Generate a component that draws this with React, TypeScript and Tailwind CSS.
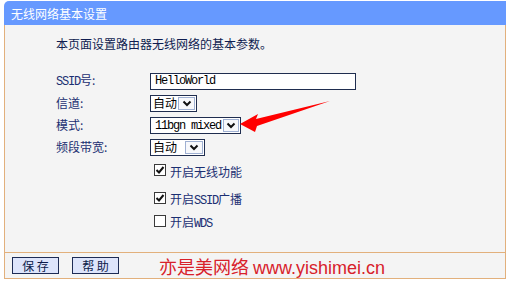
import React from 'react';

const navy = 'text-[#1b2f72]';

function Mono({ children }: { children: React.ReactNode }) {
  return <span className="font-['Liberation_Mono',monospace] text-[12px] tracking-[-1.2px]">{children}</span>;
}

function Chevron() {
  return (
    <svg width="10" height="7" viewBox="0 0 10 7">
      <polyline points="1.5,1.5 5,5 8.5,1.5" fill="none" stroke="#111" strokeWidth="2" />
    </svg>
  );
}

function Select({ width, btnWidth, children }: { width: string; btnWidth: string; children: React.ReactNode }) {
  return (
    <div className={`flex h-[17px] shrink-0 border border-[#1f2d4f] bg-white ${width}`}>
      <div className="flex flex-1 items-center overflow-hidden whitespace-nowrap pl-[2px] text-[12px] leading-none text-black">
        {children}
      </div>
      <div className={`m-[1px] flex shrink-0 items-center justify-center border border-[#9fb0d2] bg-[#f7f8fb] ${btnWidth}`}>
        <Chevron />
      </div>
    </div>
  );
}

function Check({ checked, children }: { checked: boolean; children: React.ReactNode }) {
  return (
    <div className="flex h-[22px] items-center pl-[4px]">
      <div className="flex h-[12px] w-[12px] items-center justify-center border border-[#3a3a3a] bg-white">
        {checked && (
          <svg width="10" height="10" viewBox="0 0 10 10">
            <polyline points="1.5,5 4,7.5 8.5,2" fill="none" stroke="#111" strokeWidth="2" />
          </svg>
        )}
      </div>
      <span className={`ml-[4px] mt-[3px] whitespace-nowrap text-[12px] leading-none ${navy}`}>{children}</span>
    </div>
  );
}

function Row({ label, children }: { label: React.ReactNode; children: React.ReactNode }) {
  return (
    <div className="flex h-[22px] items-center">
      <div className={`w-[94px] shrink-0 whitespace-nowrap text-[12px] leading-none ${navy}`}>{label}</div>
      {children}
    </div>
  );
}

function Button({ children }: { children: React.ReactNode }) {
  return (
    <button className="flex h-[17px] w-[47px] items-center justify-center border border-[#1d2b55] bg-[#dde4fb] text-[12px] leading-none text-[#0c1a4a]">
      {children}
    </button>
  );
}

export default function App() {
  return (
    <div className="relative h-[284px] w-[510px] bg-white font-['Noto_Sans_CJK_SC',sans-serif]">
      <div className="ml-[4px] w-[502px] pt-[1px]">
        {/* title bar */}
        <div className="flex h-[24px] items-center rounded-tl-[5px] bg-[#6699ff] pl-[7px] pt-[1px] text-[12px] text-white">
          无线网络基本设置
        </div>

        {/* form body */}
        <div className="h-[227px] border-x border-[#e2b07c] bg-[#f4f4f4] pl-[51px] pt-[10px]">
          <div className="h-[18px] text-[12px] leading-[18px] text-[#0f1d50]">本页面设置路由器无线网络的基本参数。</div>
          <div className="mt-[17px]">
            <Row label={<><Mono>SSID</Mono>号:</>}>
              <div className="flex h-[17px] w-[206px] items-center border border-[#1f2d4f] bg-white pl-[4px] text-black">
                <Mono>HelloWorld</Mono>
              </div>
            </Row>
            <Row label="信道:">
              <Select width="w-[47px]" btnWidth="w-[17px]">自动</Select>
            </Row>
            <Row label="模式:">
              <Select width="w-[91px]" btnWidth="w-[16px]">
                <span className="pl-[2px]"><Mono>11bgn mixed</Mono></span>
              </Select>
            </Row>
            <Row label="频段带宽:">
              <Select width="w-[55px]" btnWidth="w-[18px]">自动</Select>
            </Row>
          </div>
          <div className="ml-[94px] mt-[1px]">
            <Check checked>开启无线功能</Check>
            <div className="mt-[6px]">
              <Check checked>开启<Mono>SSID</Mono>广播</Check>
            </div>
            <div className="mt-[1px]">
              <Check checked={false}>开启<Mono>WDS</Mono></Check>
            </div>
          </div>
        </div>

        {/* footer */}
        <div className="flex h-[27px] items-start border border-[#e2b07c] bg-[#f4f4f4] pl-[7px] pt-[4px]">
          <Button>保&nbsp;存</Button>
          <div className="ml-[13px]">
            <Button>帮&nbsp;助</Button>
          </div>
          <div className="ml-[40px] -mt-[3px] whitespace-nowrap text-[18px] leading-[24px] text-[#d8212b]">
            亦是美网络 <span className="font-['Liberation_Sans',sans-serif]">www.yishimei.cn</span>
          </div>
        </div>
      </div>

      {/* red arrow annotation */}
      <svg className="absolute left-0 top-0" width="510" height="284" viewBox="0 0 510 284">
        <polygon points="240,124 258,114 256,119 330,101 257,126 255,132" fill="#ff0000" />
      </svg>
    </div>
  );
}
